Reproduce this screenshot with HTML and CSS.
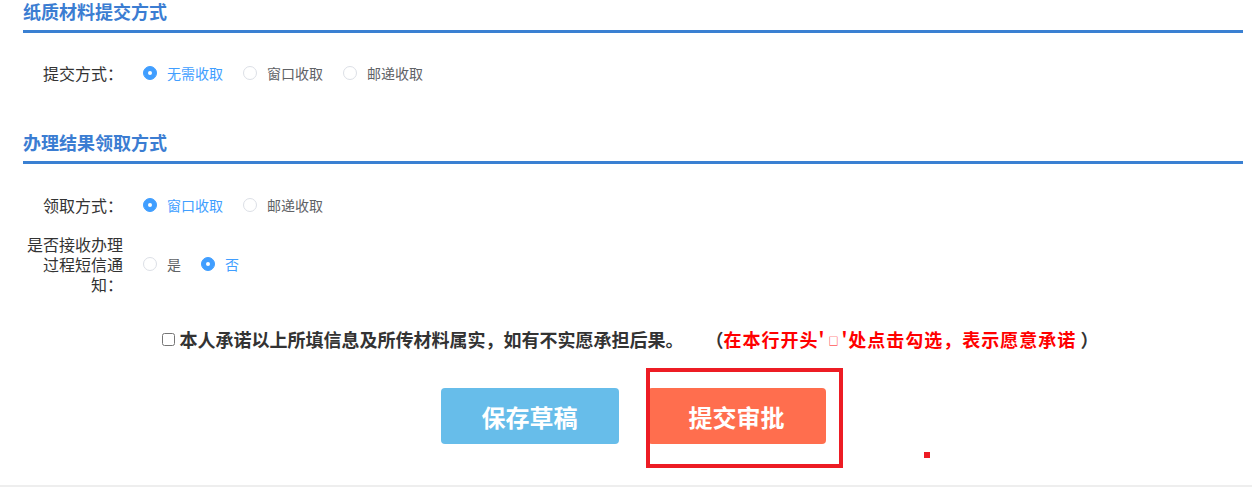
FILE: index.html
```html
<!DOCTYPE html>
<html lang="zh-CN">
<head>
<meta charset="UTF-8">
<meta name="viewport" content="width=device-width, initial-scale=1.0">
<title>材料提交</title>
<link rel="stylesheet" href="styles.css">
</head>
<body>

<div class="wrap">

  <!-- 纸质材料 -->
  <h3 class="section-title">纸质材料提交方式</h3>
  <div class="form-row first-row">
    <label class="form-label">提交方式：</label>
    <div class="radio-group">
      <span class="radio checked"><span class="radio-dot"></span><span class="radio-text">无需收取</span></span>
      <span class="radio"><span class="radio-dot"></span><span class="radio-text">窗口收取</span></span>
      <span class="radio"><span class="radio-dot"></span><span class="radio-text">邮递收取</span></span>
    </div>
  </div>

  <!-- 办理结果 -->
  <h3 class="section-title second-title">办理结果领取方式</h3>
  <div class="form-row first-row">
    <label class="form-label">领取方式：</label>
    <div class="radio-group">
      <span class="radio checked"><span class="radio-dot"></span><span class="radio-text">窗口收取</span></span>
      <span class="radio"><span class="radio-dot"></span><span class="radio-text">邮递收取</span></span>
    </div>
  </div>

  <div class="form-row sms-row">
    <label class="form-label">是否接收办理过程短信通知：</label>
    <div class="radio-group">
      <span class="radio"><span class="radio-dot"></span><span class="radio-text">是</span></span>
      <span class="radio checked"><span class="radio-dot"></span><span class="radio-text">否</span></span>
    </div>
  </div>

  <div class="agree-line">
    <input type="checkbox" id="agree">
    <label for="agree">本人承诺以上所填信息及所传材料属实，如有不实愿承担后果。</label>
    <span class="agree-note">（<span class="red">在本行开头'<span class="tiny-box">□</span>'处点击勾选，表示愿意承诺</span> ）</span>
  </div>

  <div class="actions">
    <button type="button" class="btn btn-draft">保存草稿</button>
    <button type="button" class="btn btn-submit">提交审批</button>
    <div class="mark-box"></div>
    <div class="mark-dot"></div>
  </div>

</div>

<div class="page-end"></div>

</body>
</html>
```

FILE: styles.css
```css
body {
  margin: 0;
  font-family: "Noto Sans CJK SC", "Microsoft YaHei", sans-serif;
  color: #333;
  background: #fff;
}
.wrap {
  margin: 0 9px 0 23px;
}
.section-title {
  margin: 0;
  font-size: 18px;
  font-weight: bold;
  line-height: 22px;
  color: #3b7dd2;
  padding-bottom: 8px;
  border-bottom: 3px solid #3a80d2;
}
.second-title {
  margin-top: 38px;
}
.form-row {
  display: flex;
  align-items: center;
}
.first-row {
  height: 40px;
  margin-top: 20px;
}
.second-title + .first-row {
  margin-top: 21px;
}
.sms-row {
  margin-top: 9px;
}
.form-label {
  width: 100px;
  flex-shrink: 0;
  text-align: right;
  font-size: 16px;
  line-height: 20px;
  color: #333;
}
.radio-group {
  display: flex;
  align-items: center;
  gap: 20px;
  margin-left: 20px;
}
.radio {
  display: flex;
  align-items: center;
  gap: 10px;
  font-size: 14px;
  line-height: 20px;
  color: #606266;
}
.radio-dot {
  width: 14px;
  height: 14px;
  box-sizing: border-box;
  border: 1px solid #dcdfe6;
  border-radius: 50%;
  background: #fff;
  position: relative;
}
.radio.checked {
  color: #409eff;
}
.radio.checked .radio-dot {
  background: #409eff;
  border-color: #409eff;
}
.radio.checked .radio-dot::after {
  content: "";
  position: absolute;
  left: 50%;
  top: 50%;
  width: 4px;
  height: 4px;
  margin: -2px 0 0 -2px;
  border-radius: 50%;
  background: #fff;
}
.agree-line {
  margin-top: 35px;
  display: flex;
  align-items: center;
  justify-content: center;
  height: 20px;
  font-size: 18px;
  font-weight: bold;
  color: #333;
  padding-right: 6px;
}
.agree-line input {
  margin: 0 5px 0 0;
  width: 13px;
  height: 13px;
}
.agree-note {
  margin-left: 22px;
}
.red {
  color: #ff0000;
  letter-spacing: 1px;
}
.tiny-box {
  display: inline-block;
  width: 16px;
  text-align: center;
  font-size: 10px;
  font-weight: normal;
  letter-spacing: 0;
  vertical-align: 2px;
}
.actions {
  position: relative;
  margin-top: 39px;
  display: flex;
  justify-content: center;
  gap: 29px;
}
.btn {
  width: 178px;
  height: 56px;
  border: none;
  border-radius: 4px;
  color: #fff;
  font-family: inherit;
  font-size: 24px;
  font-weight: bold;
  cursor: pointer;
}
.btn-draft {
  background: #67bdea;
}
.btn-submit {
  background: #ff6e4e;
}
.mark-box {
  position: absolute;
  left: 623px;
  top: -20px;
  width: 197px;
  height: 100px;
  box-sizing: border-box;
  border: 4px solid #ed1c24;
}
.mark-dot {
  position: absolute;
  left: 901px;
  top: 64px;
  width: 6px;
  height: 6px;
  background: #ed1c24;
}
.page-end {
  margin-top: 41px;
  height: 2px;
  background: #eeeeee;
}
```
